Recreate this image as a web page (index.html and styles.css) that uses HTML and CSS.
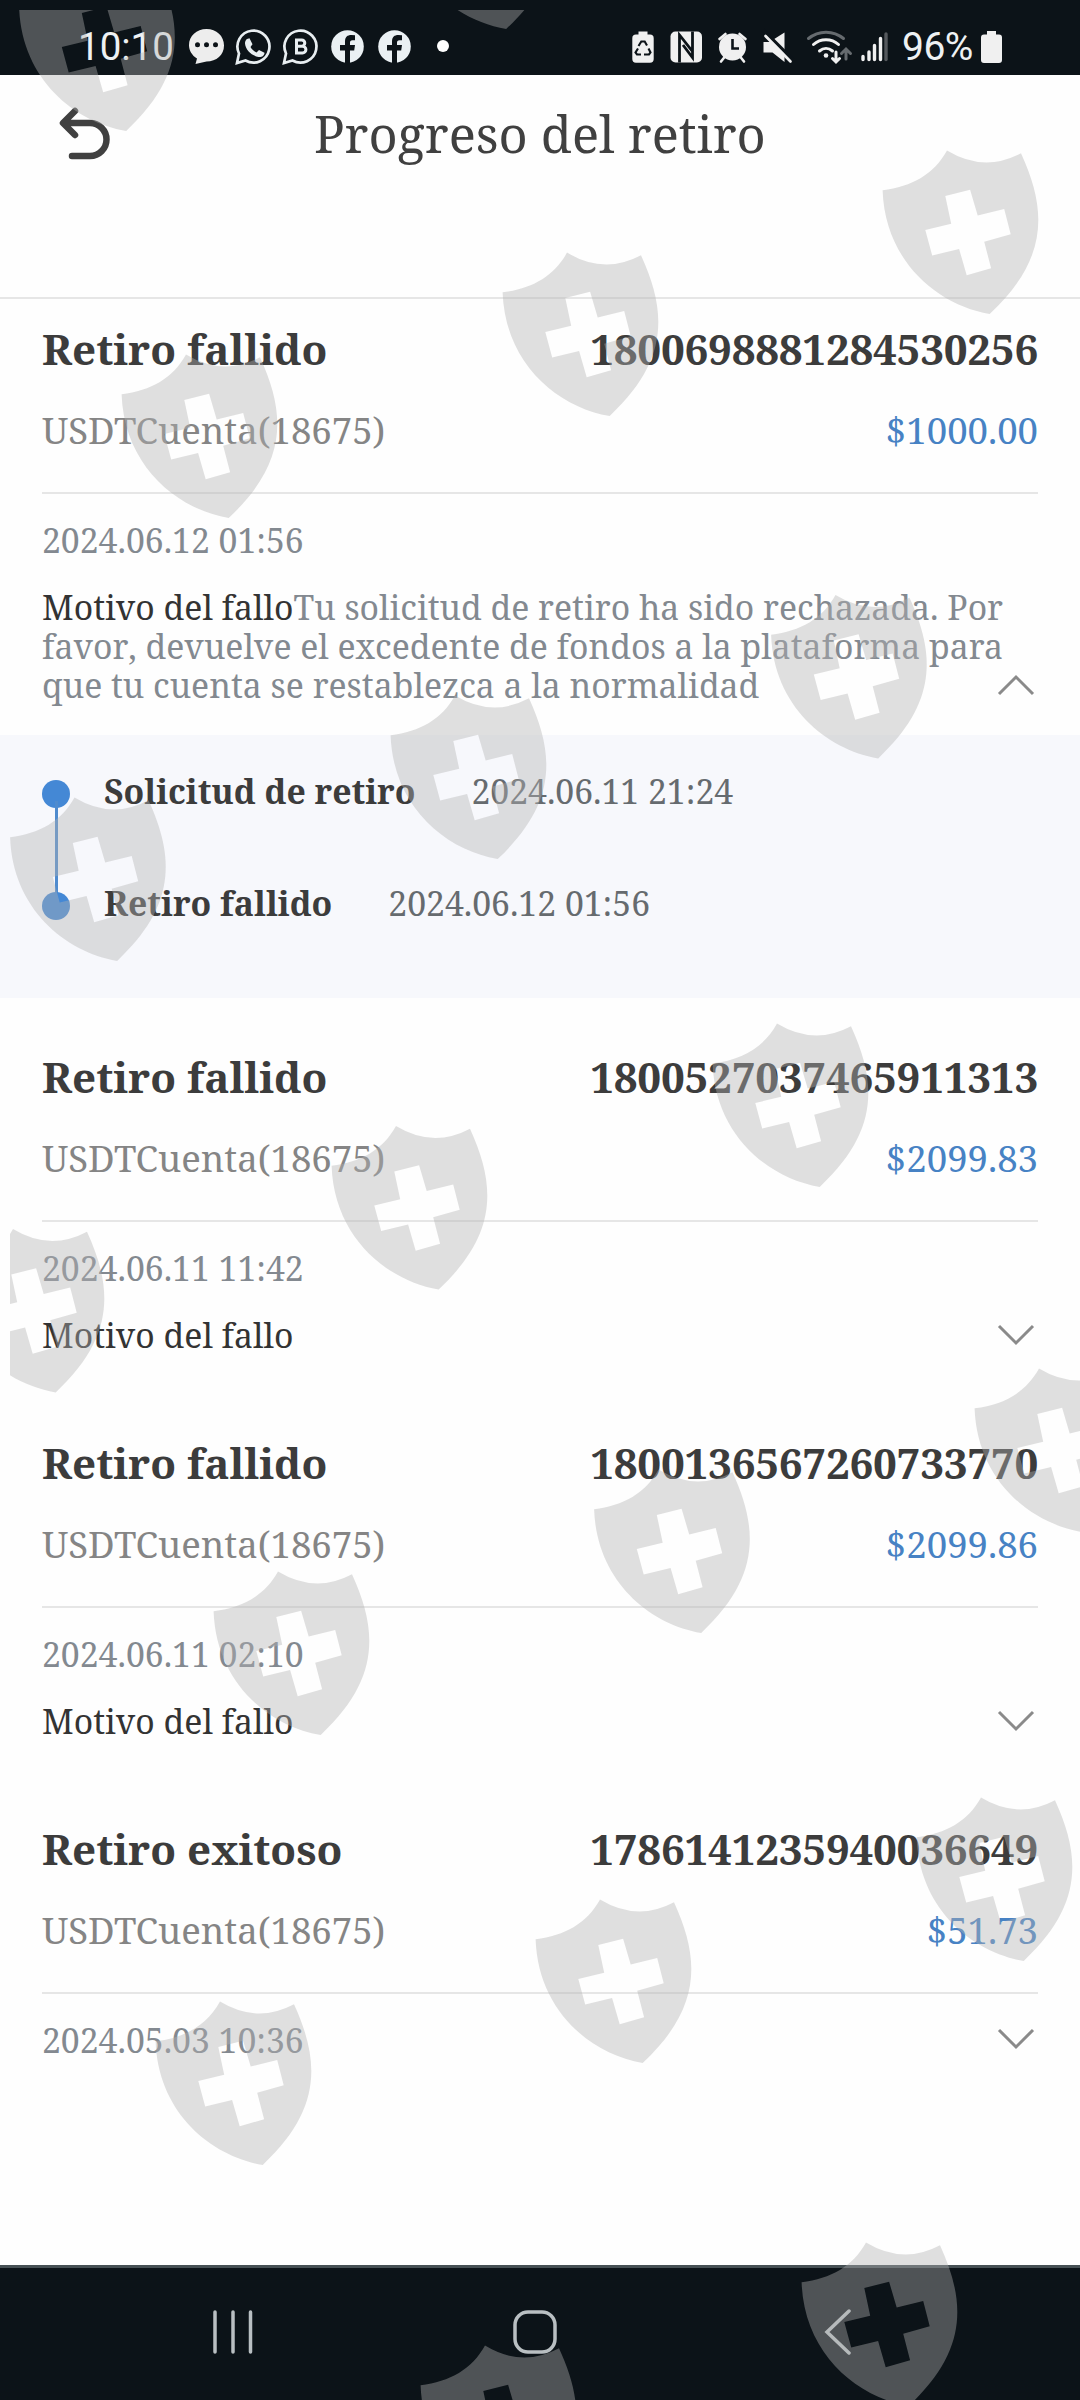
FILE: index.html
```html
<!DOCTYPE html>
<html lang="es">
<head>
    <meta charset="UTF-8">
    <meta name="viewport" content="width=device-width, initial-scale=1.0">
    <title>Progreso del retiro</title>
    <link rel="stylesheet" href="styles.css">
</head>
<body>
    <div id="main">
        <!--Status bar-->
        <div class="statusbar">
            <span class="clock">10:10</span>
            <svg class="icons-left" width="270" height="75" viewBox="185 0 270 75">
                <path fill="#ededed" d="M206.500 29c10 0 17.500 7 17.500 16.500s-7.500 16-17.500 16l-11 2.500 1.500-5.500c-5-3-8-8-8-13.500 0-9 7.500-16 17.500-16z"/>
                <g fill="#0c1318"><circle cx="197.500" cy="44.700" r="2.500"/><circle cx="206.500" cy="44.700" r="2.500"/><circle cx="215.500" cy="44.700" r="2.500"/></g>
                <g fill="none" stroke="#e8eef1" stroke-width="2.700">
                    <path d="M237 63l2-9.500a16 16 0 1 1 6.500 7z"/>
                    <path d="M284 63l2-9.500a16 16 0 1 1 6.500 7z"/>
                </g>
                <path fill="#e8eef1" d="M247 39l2.500-.7 3 6-2 2.700c1.500 2.500 3.500 4.300 6 5.500l2.500-2.500 5.500 2.800c0 3-3 4.700-6 4.200-7-1.500-13-7-13.500-13.500 0-2 .7-3.500 2-4.500z"/>
                <path fill="none" stroke="#e8eef1" stroke-width="3" d="M296.500 40h5.200a3 3 0 0 1 0 6.200h-5.200h6a3.400 3.400 0 0 1 0 6.800h-6z"/>
                <circle cx="347.500" cy="46.500" r="16.300" fill="#eaf0f3"/>
                <circle cx="394.500" cy="46.500" r="16.300" fill="#eaf0f3"/>
                <path id="f" fill="#0c1318" d="M345 63V50.500h-5V45h5v-3.500c0-4.500 2.500-6.500 6.300-6.500l3.700.3v5h-2.500c-2 0-2.500 1-2.500 2.500V45h5l-.8 5.500H350V63z"/>
                <use href="#f" x="47"/>
                <circle cx="443" cy="46" r="6" fill="#fff"/>
            </svg>
            <svg class="icons-right" width="260" height="75" viewBox="630 0 260 75">
                <path fill="#f0f0f0" d="M638.500 31.500h9v3h2.500q3.700 0 3.700 3.700V59q0 3.700-3.700 3.700h-14q-3.700 0-3.700-3.700V38.200q0-3.700 3.700-3.700h2.500z"/>
                <path fill="none" stroke="#0c1318" stroke-width="2.100" d="M638.500 46l2.800-4.500h3.400l2.300 4M648.500 48.500l2 4-1.500 2h-5M641 54.500h-4l-1.500-2 2.500-4"/>
                <rect x="670.500" y="31.500" width="31.500" height="31" rx="5" fill="#f0f0f0"/>
                <path fill="none" stroke="#0c1318" stroke-width="2.800" d="M679.500 62.500V35l13 16.500v6L683 45M692.500 31.500v20"/>
                <circle cx="732.500" cy="47" r="13.500" fill="#f0f0f0"/>
                <path fill="none" stroke="#f0f0f0" stroke-width="2.600" stroke-linecap="round" d="M719.500 39l6-5M745.500 39l-6-5M721 61.500l4-5M744 61.500l-4-5"/>
                <path fill="none" stroke="#0c1318" stroke-width="2.600" d="M732.500 39v9.500h6.500"/>
                <path fill="#f0f0f0" d="M763.500 42h6l15-9.500V62l-12-9.500h-9z"/>
                <path stroke="#0c1318" stroke-width="3.500" d="M763 30l30 30"/>
                <path stroke="#f0f0f0" stroke-width="2.700" stroke-linecap="round" d="M765.500 36l25 25.500"/>
                <g fill="none" stroke-width="3" stroke-linecap="round">
                    <path stroke="#666b6f" d="M808.500 38.500c10-8.500 25-8.500 35 0M846 59V49.500M841.500 53.500l4.500-4.500 4.500 4.500"/>
                    <path stroke="#f0f0f0" d="M813.500 44.500c7-6.500 18-6.500 25 0M819.500 51c4-3.500 9-3.500 13 0M836 52v9M832.500 58.500l3.500 3.500 3.500-3.500"/>
                </g>
                <circle cx="826" cy="55.500" r="2.300" fill="#f0f0f0"/>
                <g stroke="#f0f0f0" stroke-width="3.400" stroke-linecap="round"><path d="M863 56.500v3M869 52v7.500M874.500 45.500v14M880.500 38.500v21"/><path stroke="#55595d" d="M886 34v25.500"/></g>
            </svg>
            <span class="percent">96%</span>
            <svg class="battery" width="21" height="33" viewBox="0 0 21 33"><path fill="#f0f0f0" d="M6 0h9v3.500h3q3 0 3 3V29q0 3-3 3H3q-3 0-3-3V6.500q0-3 3-3h3z"/></svg>
        </div>

        <!--Page header-->
        <div class="header">
            <svg class="back" width="54" height="54" viewBox="0 0 54 54"><path fill="none" stroke="#404040" stroke-width="6.500" stroke-linecap="round" stroke-linejoin="round" d="M17 4L5 16l12 12M6 16h26a16.500 16.500 0 0 1 0 33H14"/></svg>
            <h1>Progreso del retiro</h1>
        </div>

        <!--Expanded record-->
        <div class="record first">
            <div class="row title"><span>Retiro fallido</span><span class="number">1800698881284530256</span></div>
            <div class="row account"><span>USDTCuenta(18675)</span><span class="amount">$1000.00</span></div>
            <div class="date">2024.06.12 01:56</div>
            <div class="row reason">
                <p><span class="label">Motivo del fallo</span>Tu solicitud de retiro ha sido rechazada. Por<br><span class="nokern">favor,</span> devuelve el excedente de fondos a la plataforma para<br>que tu cuenta se restablezca a la normalidad</p>
                <svg class="arrow up" width="38" height="22" viewBox="0 0 38 22"><path d="M2 2l17 17L36 2"/></svg>
            </div>
        </div>
        <div class="steps">
            <div class="step line"><i></i><b>Solicitud de retiro</b><span>2024.06.11 21:24</span></div>
            <div class="step"><i></i><b>Retiro fallido</b><span>2024.06.12 01:56</span></div>
        </div>

        <div class="record">
            <div class="row title"><span>Retiro fallido</span><span class="number">1800527037465911313</span></div>
            <div class="row account"><span>USDTCuenta(18675)</span><span class="amount">$2099.83</span></div>
            <div class="date">2024.06.11 11:42</div>
            <div class="row reason">
                <p><span class="label">Motivo del fallo</span></p>
                <svg class="arrow" width="38" height="22" viewBox="0 0 38 22"><path d="M2 2l17 17L36 2"/></svg>
            </div>
        </div>

        <div class="record">
            <div class="row title"><span>Retiro fallido</span><span class="number">1800136567260733770</span></div>
            <div class="row account"><span>USDTCuenta(18675)</span><span class="amount">$2099.86</span></div>
            <div class="date">2024.06.11 02:10</div>
            <div class="row reason">
                <p><span class="label">Motivo del fallo</span></p>
                <svg class="arrow" width="38" height="22" viewBox="0 0 38 22"><path d="M2 2l17 17L36 2"/></svg>
            </div>
        </div>

        <div class="record">
            <div class="row title"><span>Retiro exitoso</span><span class="number">1786141235940036649</span></div>
            <div class="row account"><span>USDTCuenta(18675)</span><span class="amount">$51.73</span></div>
            <div class="row date"><span>2024.05.03 10:36</span>
                <svg class="arrow" width="38" height="22" viewBox="0 0 38 22"><path d="M2 2l17 17L36 2"/></svg>
            </div>
        </div>

        <!--Navigation bar-->
        <div class="navbar">
            <svg width="42" height="46" viewBox="0 0 42 46"><path d="M3 3v40M21 3v40M38.500 3v40"/></svg>
            <svg width="46" height="46" viewBox="0 0 46 46"><rect x="3" y="3" width="40" height="40" rx="13"/></svg>
            <svg width="28" height="46" viewBox="0 0 28 46"><path d="M25 2L3 23l22 21"/></svg>
        </div>

        <!--Shield watermark-->
        <svg class="watermark" width="1070" height="2390" viewBox="10 10 1070 2390">
            <defs>
                <path id="shield" fill-rule="evenodd" d="M65 .6Q102 23 139 3.300C165 60 167 108.500 107.700 164C55 155 3 111 .6 40.300C30 36.800 52 24.200 65 .6z
                M63.300 46L69.200 73.700 43.300 80 50.200 105.600 77.100 98.900 84.700 125.300 109.100 118.300 102.200 91.700 128.700 84.300 122.200 59 95.700 65.600 88.100 39.700z"/>
            </defs>
            <use href="#shield" x="18.500" y="-33"/>
            <use href="#shield" x="398.500" y="-135"/>
            <use href="#shield" x="882" y="150"/>
            <use href="#shield" x="502" y="252"/>
            <use href="#shield" x="121" y="354"/>
            <use href="#shield" x="770.500" y="594.500"/>
            <use href="#shield" x="390" y="695"/>
            <use href="#shield" x="9.500" y="797"/>
            <use href="#shield" x="712" y="1023"/>
            <use href="#shield" x="331" y="1125.500"/>
            <use href="#shield" x="-52" y="1228.500"/>
            <use href="#shield" x="974" y="1368"/>
            <use href="#shield" x="593.500" y="1469"/>
            <use href="#shield" x="213" y="1571"/>
            <use href="#shield" x="916" y="1797"/>
            <use href="#shield" x="535" y="1899"/>
            <use href="#shield" x="155" y="2001"/>
            <use href="#shield" x="801" y="2242"/>
            <use href="#shield" x="420" y="2345"/>
        </svg>
    </div>
</body>
</html>
```
FILE: styles.css
```css
*{
    margin: 0;
    padding: 0;
    box-sizing: border-box;
}

body{
    background-color: #fefefe;
    font-family: "Noto Serif", "DejaVu Serif", serif;
}

#main{
    position: relative;
    width: 1080px;
    height: 2400px;
    overflow: hidden;
    display: flex;
    flex-direction: column;
}

/* status bar */
.statusbar{
    height: 75px;
    display: flex;
    flex: none;
    padding-left: 78px;
    background-color: #0c1318;
    color: #eef1f3;
    font-family: Roboto, sans-serif;
    line-height: 94px;
}

.clock{
    width: 107px;
    font-size: 38.5px;
}

.icons-right{
    margin-left: 175px;
}

.percent{
    width: 79px;
    padding-left: 12px;
    font-size: 39px;
    letter-spacing: -0.5px;
}

.battery{
    margin: 31px 0 0 12px;
}

/* header */
.header{
    height: 224px;
    flex: none;
    display: flex;
    border-bottom: 2px solid #e6e6e6;
}

.back{
    margin: 32px 0 0 58px;
}

.header h1{
    margin-left: 202px;
    font-size: 50.6px;
    font-weight: normal;
    line-height: 117px;
    white-space: nowrap;
    color: #404040;
}

/* records */
.record{
    height: 386px;
    flex: none;
    padding: 45px 42px 0;
}

.first{
    height: 436px;
    padding-top: 16px;
}

.row{
    display: flex;
    justify-content: space-between;
    white-space: nowrap;
}

.title{
    height: 68px;
    line-height: 68px;
    font-size: 42.2px;
    font-weight: bold;
    color: #3c3c3c;
}

.number{
    letter-spacing: -0.27px;
}

.account{
    height: 111px;
    border-bottom: 2px solid #e6e6e6;
    line-height: 94px;
    font-size: 36.56px;
    color: #858585;
}

.amount{
    color: #4782c4;
}

.date{
    height: 69px;
    line-height: 92px;
    font-size: 33.75px;
    color: #838990;
}

.reason{
    padding-top: 25px;
    font-size: 33.75px;
    line-height: 39px;
    color: #838990;
}

.reason p{
    width: 950px;
}

.label{
    color: #333333;
}

.nokern{
    font-kerning: none;
}

.arrow{
    flex: none;
    margin: 8px 3px 0 0;
    fill: none;
    stroke: #8a8a8a;
    stroke-width: 3;
}

.date .arrow{
    margin-top: 34px;
}

.up{
    margin-top: 86px;
    transform: rotate(180deg);
}

/* withdrawal steps */
.steps{
    height: 263px;
    flex: none;
    padding: 36px 42px 0;
    background-color: #f7f8fc;
}

.step{
    position: relative;
    display: flex;
    height: 112px;
    line-height: 40px;
    font-size: 33.75px;
    white-space: nowrap;
    color: #666b6f;
}

.step i{
    width: 28px;
    height: 28px;
    margin: 9px 34px 0 0;
    border-radius: 50%;
    background-color: #4488d5;
}

.line::after{
    content: "";
    position: absolute;
    left: 12.5px;
    top: 30px;
    width: 3px;
    height: 96px;
    background-color: #4f8bce;
}

.step b{
    margin-right: 56px;
    color: #3c3c3c;
}

/* navigation bar */
.navbar{
    display: flex;
    flex: none;
    height: 135px;
    margin-top: auto;
    padding: 41px 0 0 212px;
    border-top: 3px solid #465054;
    background-color: #0c1318;
}

.navbar svg{
    fill: none;
    stroke: #b9bfc2;
    stroke-width: 3.5;
    stroke-linecap: round;
}

.navbar svg + svg{
    margin-left: 258px;
}

.navbar svg + svg + svg{
    margin-left: 266px;
}

.watermark{
    position: absolute;
    left: 10px;
    top: 10px;
    fill: #b3b3b3;
    fill-opacity: 0.405;
}
```
